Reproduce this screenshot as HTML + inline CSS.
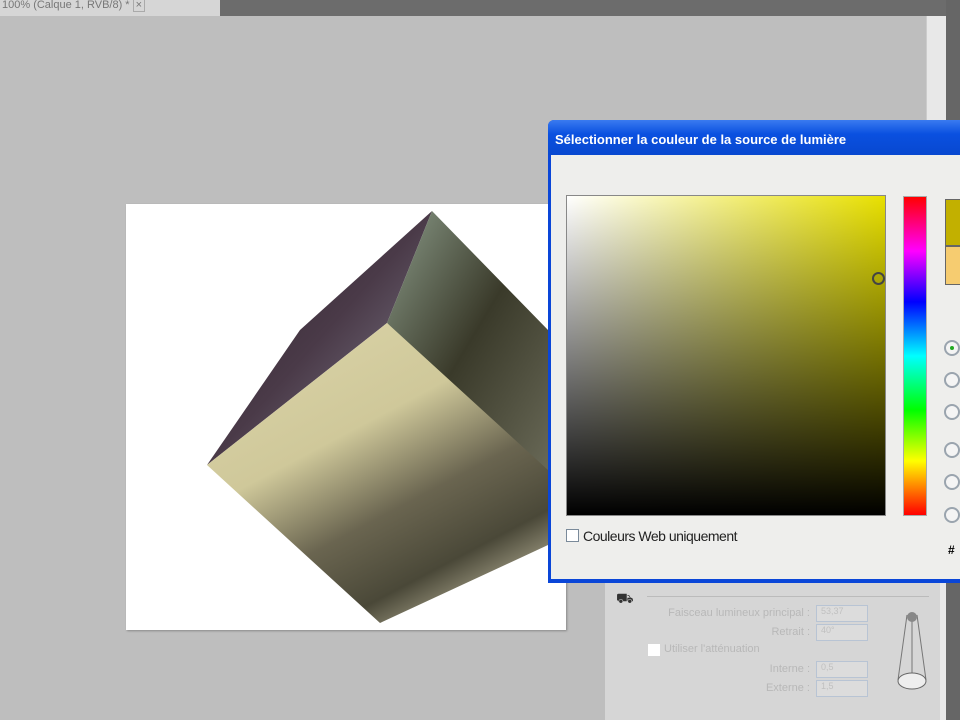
<!DOCTYPE html>
<html><head><meta charset="utf-8"><style>
*{margin:0;padding:0;box-sizing:border-box}
body{width:960px;height:720px;overflow:hidden;background:#bebebe;position:relative;font-family:"Liberation Sans",sans-serif}
.a{position:absolute}
.radio{position:absolute;left:944px;width:16px;height:16px;border-radius:50%;border:2px solid #9aa4ae;background:#f4f4f4}
.lbl{position:absolute;font-size:11px;color:#b8b8b8;text-align:right}
.box{position:absolute;left:816px;width:52px;height:17px;border:1px solid #b8c4d4;background:#dcdcdc;font-size:9px;color:#c0c0c0;padding-left:4px}
</style></head><body>
<div class="a" style="left:0;top:0;width:960px;height:16px;background:#6c6c6c"></div>
<div class="a" style="left:0;top:0;width:220px;height:16px;background:#d6d6d6;font-size:11px;color:#777;padding-left:2px;line-height:10px">100% (Calque 1, RVB/8) * <span style="border:1px solid #aaa;padding:0 2px">×</span></div>
<div class="a" style="left:926px;top:16px;width:20px;height:704px;background:#e8e8e8;border-left:1px solid #ccc"></div>
<div class="a" style="left:946px;top:0;width:14px;height:720px;background:#666"></div>
<div class="a" style="left:126px;top:204px;width:440px;height:426px;background:#fff;box-shadow:1px 1px 2px #888"></div>
<svg class="a" style="left:0;top:0" width="960" height="720">
<defs>
<linearGradient id="fr" x1="0" y1="0" x2="0.6" y2="1"><stop offset="0" stop-color="#ddd6aa"/><stop offset="0.45" stop-color="#cfc89a"/><stop offset="0.7" stop-color="#6a6550"/><stop offset="0.9" stop-color="#4a4838"/><stop offset="1" stop-color="#8a8670"/></linearGradient>
<linearGradient id="dk" x1="0" y1="0" x2="1" y2="1"><stop offset="0" stop-color="#2a2028"/><stop offset="0.5" stop-color="#4a3a48"/><stop offset="1" stop-color="#8a8898"/></linearGradient>
<linearGradient id="rt" x1="0" y1="0" x2="1" y2="1"><stop offset="0" stop-color="#8a9a88"/><stop offset="0.5" stop-color="#3a3a2a"/><stop offset="1" stop-color="#6a6a58"/></linearGradient>
</defs>
<polygon points="432,211 387,323 207,465 300,330" fill="url(#dk)"/>
<polygon points="432,211 548,330 548,480 510,460 387,323" fill="url(#rt)"/>
<polygon points="387,323 548,470 548,545 380,623 207,465" fill="url(#fr)"/>
</svg>
<div class="a" style="left:605px;top:582px;width:335px;height:138px;background:#d6d6d6"></div>
<div class="a" style="left:616px;top:590px;width:20px;height:18px;font-size:14px;color:#333">⛟</div>
<div class="a" style="left:647px;top:596px;width:282px;height:1px;background:#bbb"></div>
<div class="lbl" style="left:620px;top:607px;width:190px">Faisceau lumineux principal :</div>
<div class="lbl" style="left:620px;top:626px;width:190px">Retrait :</div>
<div class="a" style="left:648px;top:644px;width:12px;height:12px;background:#fff"></div>
<div class="lbl" style="left:664px;top:643px;text-align:left">Utiliser l'atténuation</div>
<div class="lbl" style="left:620px;top:663px;width:190px">Interne :</div>
<div class="lbl" style="left:620px;top:682px;width:190px">Externe :</div>
<div class="box" style="top:605px">53,37</div>
<div class="box" style="top:624px">40°</div>
<div class="box" style="top:661px">0,5</div>
<div class="box" style="top:680px">1,5</div>
<svg class="a" style="left:890px;top:605px" width="50" height="90"><path d="M17 10 L8 75 M27 10 L36 75 M22 8 L22 70" stroke="#777" fill="none"/><ellipse cx="22" cy="76" rx="14" ry="8" stroke="#666" fill="#eee"/><circle cx="22" cy="12" r="5" fill="#888"/></svg>
<div class="a" style="left:548px;top:120px;width:420px;height:463px;background:#0a46d8;border-radius:6px 0 0 0"></div>
<div class="a" style="left:548px;top:120px;width:420px;height:35px;background:linear-gradient(#3a7af0,#0a50e0 40%,#0848d0);border-radius:6px 0 0 0;color:#fff;font-size:13px;font-weight:bold;padding:12px 0 0 7px">Sélectionner la couleur de la source de lumière</div>
<div class="a" style="left:551px;top:155px;width:420px;height:424px;background:#eeeeec"></div>
<div class="a" style="left:566px;top:195px;width:320px;height:321px;border:1px solid #888;background:linear-gradient(to bottom,rgba(0,0,0,0),#000),linear-gradient(to right,#fff,#e8e000)"></div>
<div class="a" style="left:872px;top:272px;width:13px;height:13px;border:2px solid #444;border-radius:50%"></div>
<div class="a" style="left:903px;top:196px;width:24px;height:320px;background:linear-gradient(#f00,#f0f 17%,#00f 33%,#0ff 50%,#0f0 67%,#ff0 83%,#f00);border:1px solid #aaa"></div>
<div class="a" style="left:945px;top:199px;width:20px;height:47px;background:#c2b000;border:1px solid #666"></div>
<div class="a" style="left:945px;top:246px;width:20px;height:39px;background:#f6cc70;border:1px solid #666"></div>
<div class="radio" style="top:340px"></div><div class="a" style="left:950px;top:346px;width:4px;height:4px;background:#2a2;border-radius:50%"></div>
<div class="radio" style="top:372px"></div>
<div class="radio" style="top:404px"></div>
<div class="radio" style="top:442px"></div>
<div class="radio" style="top:474px"></div>
<div class="radio" style="top:507px"></div>
<div class="a" style="left:948px;top:543px;font-size:12px;font-weight:bold">#</div>
<div class="a" style="left:566px;top:529px;width:13px;height:13px;border:1px solid #7a8a9a;background:#fff"></div>
<div class="a" style="left:583px;top:528px;font-size:14px;color:#222;letter-spacing:-0.5px">Couleurs Web uniquement</div>
</body></html>
